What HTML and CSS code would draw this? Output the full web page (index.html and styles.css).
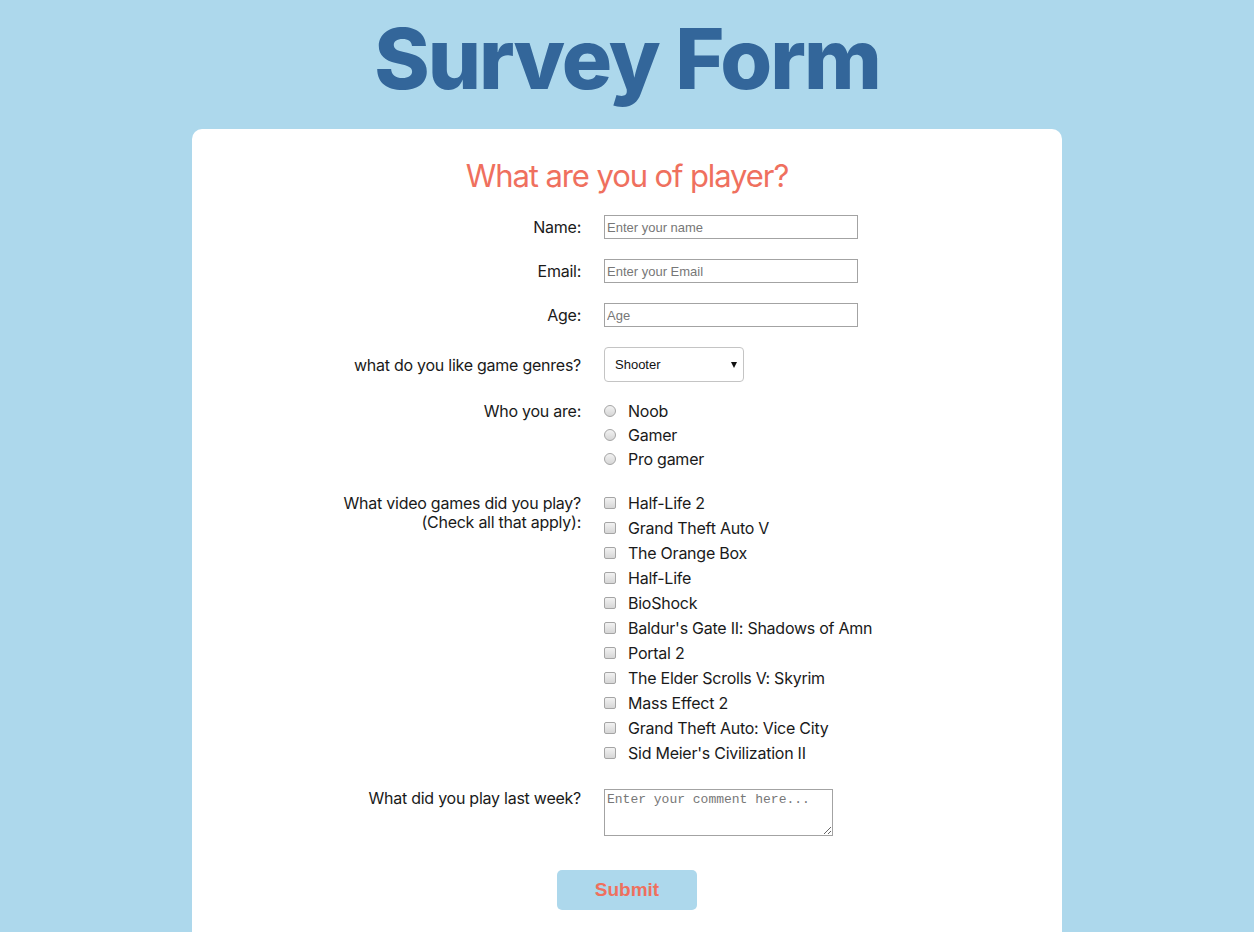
FILE: index.html
```html
<!DOCTYPE html>
<html lang="en">
<head>
<meta charset="utf-8">
<title>Survey Form</title>
<link rel="stylesheet" href="styles.css">
</head>
<body>
<h1 class="title">Survey Form</h1>
<main class="card">
  <h2 class="subtitle">What are you of player?</h2>
  <form class="form">
    <div class="row row-text">
      <label class="label" for="name">Name:</label>
      <input class="field" id="name" type="text" placeholder="Enter your name">
    </div>
    <div class="row row-text">
      <label class="label" for="email">Email:</label>
      <input class="field" id="email" type="email" placeholder="Enter your Email">
    </div>
    <div class="row row-text">
      <label class="label" for="age">Age:</label>
      <input class="field" id="age" type="number" placeholder="Age">
    </div>
    <div class="row row-select">
      <label class="label" for="genre">what do you like game genres?</label>
      <div class="select-wrap">
        <select class="select" id="genre">
          <option>Shooter</option>
          <option>RPG</option>
          <option>Strategy</option>
        </select>
      </div>
    </div>
    <div class="row row-radio">
      <div class="label">Who you are:</div>
      <ul class="options radios">
        <li><label class="opt"><input class="radio" type="radio" name="who"> Noob</label></li>
        <li><label class="opt"><input class="radio" type="radio" name="who"> Gamer</label></li>
        <li><label class="opt"><input class="radio" type="radio" name="who"> Pro gamer</label></li>
      </ul>
    </div>
    <div class="row row-check">
      <div class="label label-two">What video games did you play?<br>(Check all that apply):</div>
      <ul class="options checks">
        <li><label class="opt"><input class="check" type="checkbox"> Half-Life 2</label></li>
        <li><label class="opt"><input class="check" type="checkbox"> Grand Theft Auto V</label></li>
        <li><label class="opt"><input class="check" type="checkbox"> The Orange Box</label></li>
        <li><label class="opt"><input class="check" type="checkbox"> Half-Life</label></li>
        <li><label class="opt"><input class="check" type="checkbox"> BioShock</label></li>
        <li><label class="opt"><input class="check" type="checkbox"> Baldur's Gate II: Shadows of Amn</label></li>
        <li><label class="opt"><input class="check" type="checkbox"> Portal 2</label></li>
        <li><label class="opt"><input class="check" type="checkbox"> The Elder Scrolls V: Skyrim</label></li>
        <li><label class="opt"><input class="check" type="checkbox"> Mass Effect 2</label></li>
        <li><label class="opt"><input class="check" type="checkbox"> Grand Theft Auto: Vice City</label></li>
        <li><label class="opt"><input class="check" type="checkbox"> Sid Meier's Civilization II</label></li>
      </ul>
    </div>
    <div class="row row-area">
      <label class="label" for="comment">What did you play last week?</label>
      <textarea class="area" id="comment" placeholder="Enter your comment here..."></textarea>
    </div>
    <div class="actions">
      <button class="submit" type="submit">Submit</button>
    </div>
  </form>
</main>
</body>
</html>
```

FILE: styles.css
```css
* { box-sizing: border-box; }

html, body {
  margin: 0;
  padding: 0;
}

body {
  background: #add8ec;
  font-family: "Inter", "Open Sans", sans-serif;
  color: #1a1a1a;
  font-size: 16px;
}

.title {
  margin: 17px 0 28px;
  text-align: center;
  font-size: 84px;
  line-height: 84px;
  font-weight: 800;
  color: #33669a;
  letter-spacing: -2px;
}

.card {
  width: 870px;
  margin: 0 auto;
  background: #ffffff;
  border-radius: 10px 10px 0 0;
  padding: 27px 0 22px;
}

.subtitle {
  margin: 0 0 19px;
  text-align: center;
  font-size: 31px;
  line-height: 40px;
  font-weight: 400;
  color: #ef705e;
  letter-spacing: -1.1px;
}

.form {
  display: flex;
  flex-direction: column;
}

.row {
  display: grid;
  grid-template-columns: 389px 1fr;
  column-gap: 23px;
  align-items: start;
  margin-bottom: 20px;
}

.label {
  text-align: right;
  line-height: 20px;
  font-size: 16px;
  letter-spacing: -0.25px;
}

.row-text .label { padding-top: 2px; }

.field {
  width: 254px;
  height: 24px;
  border: 1px solid #a3a3a3;
  padding: 1px 2px;
  font-family: "Liberation Sans", Arial, sans-serif;
  font-size: 13px;
  color: #333;
  background: #fff;
  border-radius: 0;
  outline: none;
}

.field::placeholder { color: #777; }

.field::-webkit-inner-spin-button,
.field::-webkit-outer-spin-button { -webkit-appearance: none; margin: 0; }

.row-select { align-items: center; margin-bottom: 17px; }

.select-wrap {
  position: relative;
  width: 140px;
  height: 35px;
}

.select-wrap::after {
  content: "";
  position: absolute;
  right: 7px;
  top: 15px;
  border-left: 3px solid transparent;
  border-right: 3px solid transparent;
  border-top: 6px solid #111;
  pointer-events: none;
}

.select {
  -webkit-appearance: none;
  appearance: none;
  width: 140px;
  height: 35px;
  border: 1px solid #c4c4c4;
  border-radius: 4px;
  background: #fff;
  padding: 0 10px;
  font-family: "Liberation Sans", Arial, sans-serif;
  font-size: 13px;
  color: #111;
}

.options {
  list-style: none;
  margin: 0;
  padding: 0;
}

.radios li { height: 24px; line-height: 24px; }
.checks li { height: 25px; line-height: 25px; }

.row-radio .label { padding-top: 2px; }
.row-check .label { line-height: 19px; padding-top: 3px; }

.opt {
  display: flex;
  align-items: center;
  gap: 12px;
  font-size: 16px;
  color: #1a1a1a;
  letter-spacing: -0.25px;
}

.radio, .check {
  -webkit-appearance: none;
  appearance: none;
  margin: 0;
  flex: none;
  width: 12px;
  height: 12px;
  border: 1px solid #a5a5a5;
  background: linear-gradient(#f2f2f2, #d6d6d6);
}

.radio { border-radius: 50%; margin-top: 0; }
.check { border-radius: 2px; margin-top: -2px; }

.row-area { margin-bottom: 34px; }
.row-area .label { padding-top: 2px; }

.area {
  width: 229px;
  height: 47px;
  margin-top: 3px;
  border: 1px solid #a3a3a3;
  padding: 2px;
  font-family: "Liberation Mono", "DejaVu Sans Mono", monospace;
  font-size: 13px;
  display: block;
  border-radius: 0;
}

.area::placeholder { color: #777; }

.actions {
  display: flex;
  justify-content: center;
}

.submit {
  width: 140px;
  height: 40px;
  border: none;
  border-radius: 5px;
  background: #add8ec;
  color: #ef705e;
  font-family: "Liberation Sans", Arial, sans-serif;
  font-weight: 700;
  font-size: 19px;
  cursor: pointer;
}
```
